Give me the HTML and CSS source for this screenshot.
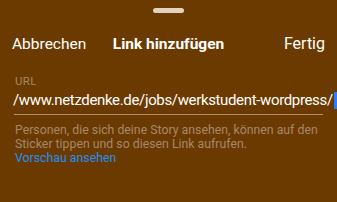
FILE: index.html
```html
<!DOCTYPE html>
<html lang="de">
<head>
<meta charset="utf-8">
<link rel="stylesheet" href="styles.css">
</head>
<body>
<div class="sheet">
  <div class="grabber"></div>
  <header class="nav">
    <span class="nav-btn nav-left">Abbrechen</span>
    <span class="nav-title">Link hinzufügen</span>
    <span class="nav-btn nav-right">Fertig</span>
  </header>
  <section class="form">
    <div class="label">URL</div>
    <div class="field">
      <span class="value">/www.netzdenke.de/jobs/werkstudent-wordpress/</span><span class="caret"></span>
    </div>
    <div class="rule"></div>
    <p class="hint">Personen, die sich deine Story ansehen, können auf den Sticker tippen und so diesen Link aufrufen.</p>
    <div class="preview">Vorschau ansehen</div>
  </section>
</div>
</body>
</html>
```
FILE: styles.css
```css
html, body {
  margin: 0;
  padding: 0;
  width: 337px;
  height: 202px;
  overflow: hidden;
  background: #6b3a01;
}
.sheet {
  font-family: Roboto, "Liberation Sans", sans-serif;
  color: #fff;
  display: flex;
  flex-direction: column;
}
.grabber {
  width: 31px;
  height: 5px;
  border-radius: 3px;
  background: #e2d3c0;
  margin: 8px auto 0;
}
.nav {
  display: grid;
  grid-template-columns: 1fr auto 1fr;
  align-items: baseline;
  padding: 0 12px 0 12px;
  margin-top: 21px;
  height: 20px;
  line-height: 20px;
  font-size: 15.5px;
}
.nav-left { justify-self: start; }
.nav-right { justify-self: end; font-size: 16px; }
.nav-title {
  font-weight: 700;
}
.form {
  padding: 0 14px 0 14px;
  margin-top: 21px;
}
.label {
  font-size: 11.5px;
  line-height: 13px;
  color: #a68561;
  padding-left: 1px;
  letter-spacing: 0.3px;
}
.field {
  display: flex;
  align-items: center;
  white-space: nowrap;
  margin-top: 2px;
  height: 20px;
  margin-right: -14px;
  margin-left: -1px;
}
.value {
  font-size: 15px;
  line-height: 20px;
  color: #fff;
  letter-spacing: -0.35px;
}
.caret {
  width: 4px;
  height: 17px;
  background: #2f7cf6;
  margin-left: 1px;
}
.rule {
  height: 1px;
  background: #b98a7c;
  width: 309px;
  margin-top: 4px;
}
.hint {
  margin: 8px 0 0 1px;
  font-size: 12.3px;
  line-height: 14px;
  color: #a6876b;
}
.preview {
  font-size: 12.3px;
  line-height: 14px;
  color: #1e8ff5;
  padding-left: 1px;
}
```
